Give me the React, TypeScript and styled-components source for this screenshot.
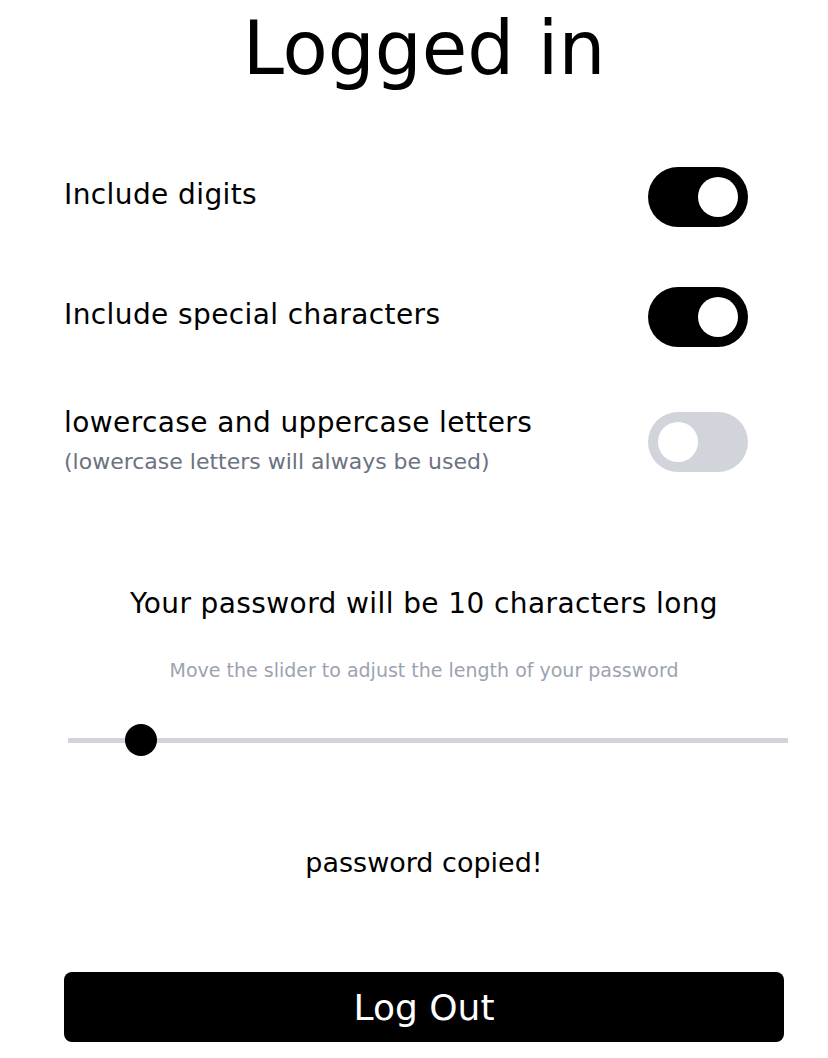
import React, { useState } from "react";
import styled, { createGlobalStyle } from "styled-components";

const GlobalStyle = createGlobalStyle`
  html, body {
    margin: 0;
    padding: 0;
    background: #ffffff;
  }
  body {
    font-family: "DejaVu Sans", "Noto Sans", sans-serif;
    color: #000000;
  }
  * { box-sizing: border-box; }
`;

const Page = styled.main`
  width: 720px;
  margin-left: 64px;
  display: flex;
  flex-direction: column;
`;

const Title = styled.h1`
  margin: 0;
  font-size: 74px;
  font-weight: 400;
  line-height: 96px;
  text-align: center;
`;

const Options = styled.section`
  margin-top: 71px;
  width: 684px;
  display: flex;
  flex-direction: column;
  gap: 60px;
`;

const OptionRow = styled.label<{ $extraTop?: number }>`
  display: flex;
  align-items: center;
  justify-content: space-between;
  height: 60px;
  margin-top: ${(p) => p.$extraTop ?? 0}px;
  cursor: pointer;
`;

const LabelBlock = styled.div`
  display: flex;
  flex-direction: column;
  gap: 4px;
`;

const LabelText = styled.span`
  font-size: 28px;
  letter-spacing: 0.4px;
  line-height: 40px;
  margin-top: -4px;
`;

const HintText = styled.span`
  font-size: 22px;
  line-height: 30px;
  color: #6b7280;
`;

const Track = styled.span<{ $on: boolean }>`
  position: relative;
  flex: none;
  width: 100px;
  height: 60px;
  border-radius: 30px;
  background: ${(p) => (p.$on ? "#000000" : "#d1d5db")};
`;

const Knob = styled.span<{ $on: boolean }>`
  position: absolute;
  top: 10px;
  left: ${(p) => (p.$on ? "50px" : "10px")};
  width: 40px;
  height: 40px;
  border-radius: 50%;
  background: #ffffff;
`;

const LengthTitle = styled.p`
  margin: 112px 0 0;
  font-size: 28px;
  letter-spacing: 0.4px;
  line-height: 40px;
  text-align: center;
`;

const LengthHint = styled.p`
  margin: 33px 0 0;
  font-size: 19px;
  line-height: 26px;
  text-align: center;
  color: #9ca3af;
`;

const Range = styled.input`
  -webkit-appearance: none;
  appearance: none;
  width: 720px;
  height: 32px;
  margin: 41px 0 0 4px;
  padding: 0;
  background: transparent;

  &::-webkit-slider-runnable-track {
    height: 5px;
    background: #d1d5db;
    border-radius: 0;
  }
  &::-webkit-slider-thumb {
    -webkit-appearance: none;
    appearance: none;
    width: 32px;
    height: 32px;
    margin-top: -14px;
    border-radius: 50%;
    background: #000000;
    border: none;
  }
`;

const CopiedText = styled.p`
  margin: 87px 0 0;
  font-size: 27px;
  line-height: 40px;
  text-align: center;
`;

const LogOutButton = styled.button`
  margin-top: 89px;
  width: 720px;
  height: 70px;
  border: none;
  border-radius: 8px;
  background: #000000;
  color: #ffffff;
  font-family: inherit;
  font-size: 36px;
  font-weight: 500;
  cursor: pointer;
`;

type ToggleProps = { on: boolean; onToggle: () => void };

const Toggle = ({ on, onToggle }: ToggleProps) => (
  <Track $on={on} role="switch" aria-checked={on} onClick={onToggle}>
    <Knob $on={on} />
  </Track>
);

export default function App() {
  const [digits, setDigits] = useState(true);
  const [special, setSpecial] = useState(true);
  const [mixed, setMixed] = useState(false);
  const [length, setLength] = useState(10);

  return (
    <>
      <GlobalStyle />
      <Page>
        <Title>Logged in</Title>
        <Options>
          <OptionRow>
            <LabelText>Include digits</LabelText>
            <Toggle on={digits} onToggle={() => setDigits(!digits)} />
          </OptionRow>
          <OptionRow>
            <LabelText>Include special characters</LabelText>
            <Toggle on={special} onToggle={() => setSpecial(!special)} />
          </OptionRow>
          <OptionRow $extraTop={5}>
            <LabelBlock>
              <LabelText>lowercase and uppercase letters</LabelText>
              <HintText>(lowercase letters will always be used)</HintText>
            </LabelBlock>
            <Toggle on={mixed} onToggle={() => setMixed(!mixed)} />
          </OptionRow>
        </Options>
        <LengthTitle>Your password will be {length} characters long</LengthTitle>
        <LengthHint>Move the slider to adjust the length of your password</LengthHint>
        <Range
          type="range"
          min={8}
          max={32}
          value={length}
          onChange={(e) => setLength(Number(e.target.value))}
        />
        <CopiedText>password copied!</CopiedText>
        <LogOutButton>Log Out</LogOutButton>
      </Page>
    </>
  );
}
